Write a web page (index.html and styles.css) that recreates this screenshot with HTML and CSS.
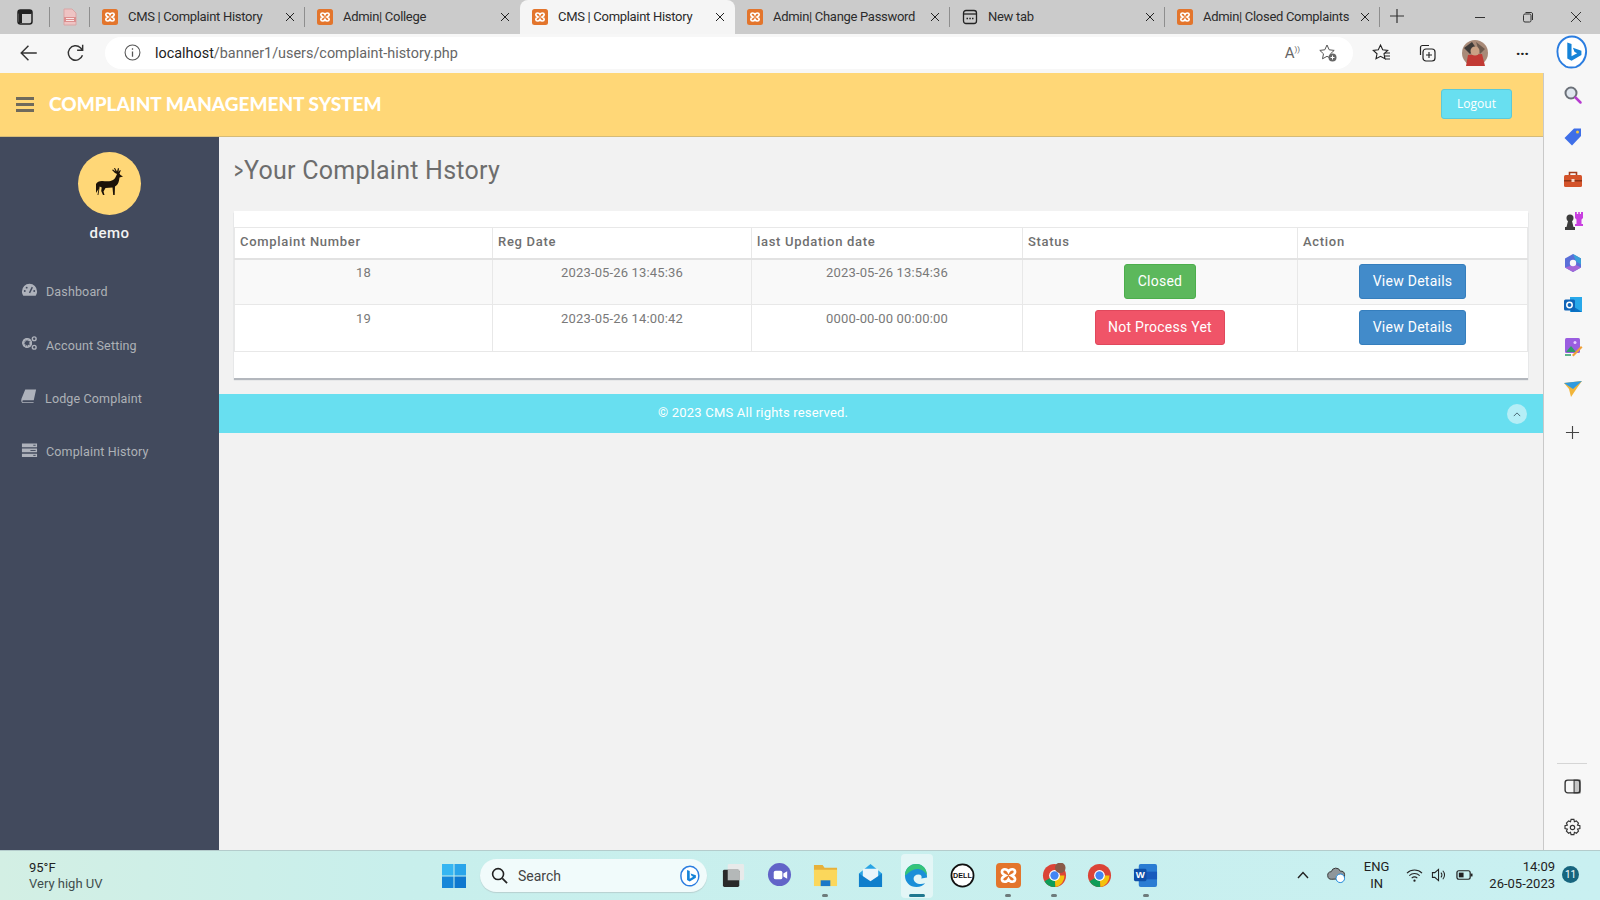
FILE: index.html
```html
<!DOCTYPE html>
<html lang="en">
<head>
    <meta charset="UTF-8">
    <title>CMS | Complaint History</title>
    <link rel="stylesheet" href="styles.css">
</head>
<body>
    <svg class="defs" width="0" height="0">
        <symbol id="xampp" viewBox="0 0 16 16">
            <rect width="16" height="16" rx="2.5" fill="#e3752c"/>
            <path d="M8 5.5C7 3.5 4 3.5 3.8 5.5 3.7 7 5 7.5 6 8 5 8.5 3.7 9 3.8 10.5 4 12.5 7 12.5 8 10.5 9 12.5 12 12.5 12.2 10.5 12.3 9 11 8.5 10 8 11 7.5 12.3 7 12.2 5.5 12 3.5 9 3.5 8 5.5z" fill="none" stroke="#fff" stroke-width="1.7"/>
        </symbol>
        <symbol id="close" viewBox="0 0 10 10">
            <path d="M1 1l8 8M9 1L1 9" fill="none" stroke="#222" stroke-width="1"/>
        </symbol>
    </svg>

    <div class="tabstrip">
        <div class="strip-left">
            <svg class="strip-icon" viewBox="0 0 18 18"><rect x="2" y="2" width="14" height="14" rx="2.5" fill="none" stroke="#222" stroke-width="1.5"/><rect x="2" y="2" width="14" height="4" rx="1.5" fill="#222"/><rect x="3" y="5" width="3" height="10" fill="#222"/></svg>
            <span class="tab-sep"></span>
            <svg class="strip-icon" viewBox="0 0 18 18"><path d="M3 1h8l4 4v12H3z" fill="#eec3c3" stroke="#d9a5a5"/><rect x="3" y="9" width="12" height="5" fill="#dc8f8f"/><path d="M5 10.5h8M5 12.5h8" stroke="#fff" stroke-width=".8"/></svg>
            <span class="tab-sep"></span>
        </div>
        <div class="tab"><svg class="tab-icon"><use href="#xampp"/></svg><span class="tab-title">CMS | Complaint History</span><svg class="tab-close"><use href="#close"/></svg></div>
        <div class="tab"><svg class="tab-icon"><use href="#xampp"/></svg><span class="tab-title">Admin| College</span><svg class="tab-close"><use href="#close"/></svg></div>
        <div class="tab tab-active"><svg class="tab-icon"><use href="#xampp"/></svg><span class="tab-title">CMS | Complaint History</span><svg class="tab-close"><use href="#close"/></svg></div>
        <div class="tab"><svg class="tab-icon"><use href="#xampp"/></svg><span class="tab-title">Admin| Change Password</span><svg class="tab-close"><use href="#close"/></svg></div>
        <div class="tab"><svg class="tab-icon" viewBox="0 0 16 16"><rect x="1.5" y="1.5" width="13" height="13" rx="2.5" fill="none" stroke="#222" stroke-width="1.3"/><path d="M2 5h12" stroke="#222" stroke-width="1.3"/><path d="M4.5 9.5H6M7.3 9.5h1.5M10 9.5h1.5" stroke="#222" stroke-width="1.3"/></svg><span class="tab-title">New tab</span><svg class="tab-close"><use href="#close"/></svg></div>
        <div class="tab"><svg class="tab-icon"><use href="#xampp"/></svg><span class="tab-title">Admin| Closed Complaints</span><svg class="tab-close"><use href="#close"/></svg></div>
        <svg class="new-tab" viewBox="0 0 16 16"><path d="M8 1v14M1 8h14" stroke="#333" stroke-width="1.2"/></svg>
        <div class="window-btns">
            <svg viewBox="0 0 12 12"><path d="M1 6.5h10" stroke="#333"/></svg>
            <svg viewBox="0 0 12 12"><rect x="1.5" y="3" width="7.5" height="8" rx="1.5" fill="none" stroke="#333"/><path d="M3.5 1.5h6a1.5 1.5 0 0 1 1 1.5v6" fill="none" stroke="#333"/></svg>
            <svg viewBox="0 0 12 12"><path d="M1 1l10 10M11 1L1 11" stroke="#333"/></svg>
        </div>
    </div>

    <div class="toolbar">
        <svg class="tool-icon back" viewBox="0 0 18 18"><path d="M16 9H2M8.5 2.5L2 9l6.5 6.5" fill="none" stroke="#333" stroke-width="1.3"/></svg>
        <svg class="tool-icon reload" viewBox="0 0 18 18"><path d="M14.8 11A6.5 6.5 0 1 1 13 4.2L15 6.5M15 1.5v5h-5" fill="none" stroke="#333" stroke-width="1.3"/></svg>
        <div class="address">
            <svg class="info" viewBox="0 0 16 16"><circle cx="8" cy="8" r="7" fill="none" stroke="#555"/><path d="M8 7v5M8 4v1.5" stroke="#555" stroke-width="1.2"/></svg>
            <span class="url"><span class="host">localhost</span>/banner1/users/complaint-history.php</span>
            <span class="read-aloud">A<sup>))</sup></span>
            <svg class="star-add" viewBox="0 0 20 20"><path d="M9 2l2.2 4.8 5 .6-3.7 3.4 1 5L9 13.3 4.5 15.8l1-5L1.8 7.4l5-.6z" fill="none" stroke="#555" stroke-width="1"/><circle cx="14.5" cy="14.5" r="4" fill="#666"/><path d="M14.5 12.5v4M12.5 14.5h4" stroke="#fff"/></svg>
        </div>
        <svg class="tool-icon fav" viewBox="0 0 20 20"><path d="M8.5 2l2.2 4.8 5 .6-3.7 3.4 1 5-4.5-2.5L4 15.8l1-5L1.3 7.4l5-.6z" fill="none" stroke="#222" stroke-width="1.1"/><path d="M13 10h5M13 13h5M13 16h5" stroke="#222" stroke-width="1"/></svg>
        <svg class="tool-icon coll" viewBox="0 0 20 20"><rect x="6" y="6" width="12" height="12" rx="3" fill="none" stroke="#222" stroke-width="1.2"/><path d="M12 9v6M9 12h6" stroke="#222" stroke-width="1.1"/><path d="M3.5 12V4.5a2 2 0 0 1 2-2H12" fill="none" stroke="#222" stroke-width="1.2"/></svg>
        <svg class="profile" viewBox="0 0 26 26"><circle cx="13" cy="13" r="13" fill="#a88a78"/><path d="M2 8l8-6 4 6-6 6z" fill="#3e3a38"/><path d="M14 2l9 7-5 5z" fill="#6d5a4e"/><path d="M4 26l2-11 14-1 3 12z" fill="#c23a34"/><circle cx="13" cy="11" r="4.5" fill="#caa184"/></svg>
        <span class="more">···</span>
        <svg class="bing" viewBox="0 0 34 36"><path d="M17 1.5C8 1.5 1.5 9 1.5 17.5c0 7 3 12.5 9 16 4 1.5 8 1 10.5.5 6-2 11-8.5 11-16.5C32 9 25.5 1.5 17 1.5z" fill="#fff" stroke="#2b7de0" stroke-width="2"/><path d="M12 8l4.5 1.5v13l6-3.3-2.8-1.3-1.7-4.3 9 3.2v4.3l-10.5 6.2-4.5-2.5z" fill="#1583d8"/></svg>
    </div>

    <div class="window-body">
        <div class="page">
            <header class="topbar">
                <div class="hamburger"><span></span><span></span><span></span></div>
                <span class="brand">COMPLAINT MANAGEMENT SYSTEM</span>
                <a class="logout">Logout</a>
            </header>
            <div class="page-body">
                <aside class="sidebar">
                    <div class="avatar">
                        <svg viewBox="0 0 40 40"><path d="M6 20c1-2 3-3 6-3 4 0 8 1 11-1 2-1 3-4 4-6l-2-1-3-3 1-.5 2.5 2L24 4h1l2 3.5L28 4l1 .5-.5 3.5 1.5-2 .8.5-1.3 3 1 1.5 2.5 1.5-3.5 1-.5 3c-.5 3-2 5-4 6l-.3 8.5h-1.5l-.7-7.5-7 .5-2 3.5 1 3.5h-1.5l-1.8-4 .5-3.5-2-1-1.3 8.5H7.5L8.5 25 6 29z" fill="#1c1208"/></svg>
                    </div>
                    <div class="user-name">demo</div>
                    <nav class="side-nav">
                        <a class="nav-item"><svg viewBox="0 0 18 16"><path d="M9 1.5a8 8 0 0 0-8 8c0 1.800.6 3.300 1.500 4.500h13c.9-1.200 1.500-2.700 1.500-4.500a8 8 0 0 0-8-8z" fill="#aeb2bb"/><path d="M9 11l3-6" stroke="#424a5d" stroke-width="1.5"/><circle cx="4" cy="9" r="1" fill="#424a5d"/><circle cx="6" cy="5.5" r="1" fill="#424a5d"/><circle cx="14" cy="9" r="1" fill="#424a5d"/></svg>Dashboard</a>
                        <a class="nav-item"><svg viewBox="0 0 18 16"><circle cx="6.5" cy="8" r="3.8" fill="none" stroke="#aeb2bb" stroke-width="2.6" stroke-dasharray="2 .7"/><circle cx="6.5" cy="8" r="4.5" fill="none" stroke="#aeb2bb" stroke-width="1.5"/><circle cx="14" cy="3.5" r="2" fill="none" stroke="#aeb2bb" stroke-width="1.5"/><circle cx="14" cy="12.5" r="2" fill="none" stroke="#aeb2bb" stroke-width="1.5"/></svg>Account Setting</a>
                        <a class="nav-item item-tight"><svg viewBox="0 0 18 16"><path d="M4.5 1H16l-2.5 11.500H2.500C1 12.500 1 14.500 2.500 14.500h11l-.3 1H2C.2 15.500 0 13 .5 11z" fill="#aeb2bb"/></svg>Lodge Complaint</a>
                        <a class="nav-item"><svg viewBox="0 0 18 16"><path d="M1 1h16v4H1zM1 6.500h16v4H1zM1 12h16v3.500H1z" fill="#aeb2bb"/><path d="M13 3h2.500M10 8.500h5.500M13 13.700h2.500" stroke="#424a5d"/></svg>Complaint History</a>
                    </nav>
                </aside>
                <main class="content">
                    <h3 class="page-title"><span class="title-mark">&gt;</span>Your Complaint Hstory</h3>
                    <section class="panel">
                        <table class="history">
                            <colgroup>
                                <col class="col-num"><col class="col-reg"><col class="col-upd"><col class="col-status"><col class="col-action">
                            </colgroup>
                            <thead>
                                <tr>
                                    <th>Complaint Number</th>
                                    <th>Reg Date</th>
                                    <th>last Updation date</th>
                                    <th>Status</th>
                                    <th>Action</th>
                                </tr>
                            </thead>
                            <tbody>
                                <tr class="odd">
                                    <td>18</td>
                                    <td>2023-05-26 13:45:36</td>
                                    <td>2023-05-26 13:54:36</td>
                                    <td><a class="btn btn-green">Closed</a></td>
                                    <td><a class="btn btn-blue">View Details</a></td>
                                </tr>
                                <tr class="even">
                                    <td>19</td>
                                    <td>2023-05-26 14:00:42</td>
                                    <td>0000-00-00 00:00:00</td>
                                    <td><a class="btn btn-red">Not Process Yet</a></td>
                                    <td><a class="btn btn-blue">View Details</a></td>
                                </tr>
                            </tbody>
                        </table>
                    </section>
                    <footer class="site-footer">
                        <span class="copy">© 2023 CMS All rights reserved.</span>
                        <a class="go-top"><svg viewBox="0 0 10 6"><path d="M1 5l4-4 4 4" fill="none" stroke="#3e5a66" stroke-width="1.1"/></svg></a>
                    </footer>
                </main>
            </div>
        </div>
        <aside class="edge-rail">
            <div class="rail-top">
                <svg viewBox="0 0 20 20"><circle cx="8" cy="8" r="5.5" fill="#dfe6ee" stroke="#6b7078" stroke-width="2"/><path d="M12.5 12.5l5 5" stroke="#b63bd0" stroke-width="2.5" stroke-linecap="round"/></svg>
                <svg viewBox="0 0 20 20"><path d="M11 1.5h7V9l-9 9.5L1.500 11z" fill="#3f6fe8"/><circle cx="14.5" cy="5" r="1.5" fill="#f4c63d"/></svg>
                <svg viewBox="0 0 20 20"><rect x="1" y="6" width="18" height="12" rx="1.5" fill="#d4532a"/><path d="M6.5 6V3.5h7V6" fill="none" stroke="#a33c1c" stroke-width="1.6"/><rect x="1" y="11" width="18" height="1.5" fill="#8f3516"/><rect x="8.5" y="10" width="3" height="3" fill="#f4d5c4"/></svg>
                <svg viewBox="0 0 20 20"><circle cx="7" cy="7" r="3.5" fill="#3c3c3c"/><path d="M5 10h4l1.500 6h-7zM2 16h10v3H2z" fill="#3c3c3c"/><path d="M12 1h1.800v2h1.400V1h1.600v2h1.200V1H20v6l-1.500 1.500V13H20v2h-8v-2h1.500V8.500L12 7z" fill="#c83ee0"/></svg>
                <svg viewBox="0 0 20 20"><path d="M10 1l8 4.500v9L10 19l-8-4.500v-9z" fill="#5a6fd8"/><path d="M10 1l8 4.500v6L13 8.500z" fill="#3aa0d8"/><path d="M2 14.500L10 19l8-4.500-6-3z" fill="#a568d8"/><circle cx="10" cy="10" r="3.2" fill="#f8f8f8"/></svg>
                <svg viewBox="0 0 20 20"><path d="M7 2h12v15H7z" fill="#28a8ea"/><path d="M8 10l11 7H8z" fill="#0a72c4"/><rect x="1" y="4.5" width="11" height="11" rx="1.5" fill="#0f64b8"/><circle cx="6.5" cy="10" r="2.7" fill="none" stroke="#fff" stroke-width="1.5"/></svg>
                <svg viewBox="0 0 20 20"><rect x="2" y="1" width="15" height="15" rx="1.5" fill="#9a5de0"/><path d="M3 15l5-6 5 6z" fill="#2c9c66"/><circle cx="12" cy="5.5" r="1.5" fill="#e6d0ff"/><path d="M9 18l9-9 1.500 1.500-9 9z" fill="#f0a038"/><path d="M2 18h6" stroke="#2c9c66" stroke-width="1.5"/></svg>
                <svg viewBox="0 0 20 20"><path d="M1 4l18-2-5 7-6 9-2-8z" fill="#f1b53a"/><path d="M1 4l18-2-9 8z" fill="#2f9ae0"/></svg>
                <svg class="rail-plus" viewBox="0 0 16 16"><path d="M8 1v14M1 8h14" stroke="#444" stroke-width="1.2"/></svg>
            </div>
            <div class="rail-bottom">
                <span class="rail-line"></span>
                <svg viewBox="0 0 18 18"><rect x="2" y="3" width="14" height="12" rx="2.5" fill="none" stroke="#333" stroke-width="1.3"/><rect x="10.5" y="3" width="5.5" height="12" fill="#333" fill-opacity=".25" stroke="#333"/></svg>
                <svg viewBox="0 0 20 20"><path d="M8.500 1.500h3l.5 2.500 2-.9 2.300 2.200-1 2.100 2.500.6v3.200l-2.500.5 1 2.100-2.200 2.200-2.100-1-.5 2.500h-3l-.6-2.500-2 1-2.300-2.200 1-2.100-2.500-.5V8l2.500-.6-1-2.100 2.300-2.200 2 .9z" fill="none" stroke="#333" stroke-width="1.2"/><circle cx="10" cy="10" r="2.3" fill="none" stroke="#333" stroke-width="1.2"/></svg>
            </div>
        </aside>
    </div>

    <div class="taskbar">
        <div class="weather">
            <div class="temp">95°F</div>
            <div>Very high UV</div>
        </div>
        <svg class="win-logo" viewBox="0 0 24 24"><path d="M0 0h11.500v11.500H0z" fill="#35b6f2"/><path d="M12.500 0H24v11.500H12.500z" fill="#29a5ea"/><path d="M0 12.500h11.500V24H0z" fill="#1587d9"/><path d="M12.500 12.500H24V24H12.500z" fill="#0e78cf"/></svg>
        <div class="search">
            <svg viewBox="0 0 18 18"><circle cx="7.5" cy="7.5" r="5.8" fill="none" stroke="#222" stroke-width="1.7"/><path d="M12 12l5 5" stroke="#222" stroke-width="1.9"/></svg>
            <span>Search</span>
            <svg class="search-bing" viewBox="0 0 34 36"><path d="M17 1.5C8 1.5 1.5 9 1.5 17.5c0 7 3 12.5 9 16 4 1.5 8 1 10.5.5 6-2 11-8.5 11-16.5C32 9 25.5 1.5 17 1.5z" fill="#fff" stroke="#2b7de0" stroke-width="2.5"/><path d="M12 8l4.500 1.500v13l6-3.300-2.800-1.300-1.700-4.300 9 3.200v4.300l-10.500 6.200-4.500-2.500z" fill="#1583d8"/></svg>
        </div>
        <div class="task-apps">
            <span class="app"><svg viewBox="0 0 26 26"><rect x="7" y="1" width="17" height="17" rx="1.5" fill="#e8eaea"/><rect x="2" y="7" width="17" height="18" rx="1.5" fill="#2a2a2a"/><path d="M7 7h12v11H7z" fill="#b4b8b8"/></svg></span>
            <span class="app"><svg viewBox="0 0 26 26"><circle cx="13" cy="12" r="12" fill="#6264c8"/><path d="M6 22l2-5 5 4z" fill="#6264c8"/><rect x="7" y="8" width="9" height="9" rx="2" fill="#fff"/><path d="M17 11l4-2.500v8L17 14z" fill="#fff"/></svg></span>
            <span class="app has-dot"><svg viewBox="0 0 26 26"><path d="M1 2h9l2 3h13v6H1z" fill="#e7b13a"/><path d="M1 7h24v17H1z" fill="#fbd75b"/><rect x="8" y="18" width="10" height="6" fill="#1b78c8"/></svg></span>
            <span class="app"><svg viewBox="0 0 26 26"><path d="M13 1l12 10v14H1V11z" fill="#29a4e4"/><path d="M5 6h16v11l-8 4-8-4z" fill="#e9f5fb"/><path d="M1 11l12 8 12-8v14H1z" fill="#0f7fcc"/></svg></span>
            <span class="app app-active"><svg viewBox="0 0 26 26"><path d="M24 15c0-8-4-14-11-14C6 1 1 6 1 13c0 7 5 12 12 12 4 0 7-1.500 9-4-6 2-12 0-12-5 0-2 2-4 5-4 3 0 4 2 3 4z" fill="#1a8fd8"/><path d="M1 13C1 6 6 1 13 1c7 0 11 6 11 12-3-6-9-8-14-6-4 1.500-7 5-9 6z" fill="#35c47a"/></svg></span>
            <span class="app"><svg viewBox="0 0 26 26"><circle cx="13" cy="13" r="11.5" fill="#fff" stroke="#111" stroke-width="1.8"/><text x="13" y="15.8" text-anchor="middle" class="dell-text">DELL</text></svg></span>
            <span class="app has-dot"><svg><use href="#xampp"/></svg></span>
            <span class="app has-dot"><svg viewBox="0 0 26 26"><circle cx="13" cy="13" r="12" fill="#db4437"/><path d="M13 13L2.600 19A12 12 0 0 0 13 25h1z" fill="#0f9d58"/><path d="M13 13h10.400A12 12 0 0 1 14 25z" fill="#f4c20d"/><circle cx="13" cy="13" r="5.6" fill="#fff"/><circle cx="13" cy="13" r="4.3" fill="#4285f4"/><circle cx="19" cy="5" r="5.5" fill="#8a5a48"/></svg></span>
            <span class="app"><svg viewBox="0 0 26 26"><circle cx="13" cy="13" r="12" fill="#db4437"/><path d="M13 13L2.600 19A12 12 0 0 0 13 25h1z" fill="#0f9d58"/><path d="M13 13h10.400A12 12 0 0 1 14 25z" fill="#f4c20d"/><circle cx="13" cy="13" r="5.6" fill="#fff"/><circle cx="13" cy="13" r="4.3" fill="#4285f4"/></svg></span>
            <span class="app has-dot"><svg viewBox="0 0 26 26"><rect x="6" y="1" width="19" height="24" rx="2" fill="#2b7cd3"/><path d="M6 9h19v8H6z" fill="#185abd"/><rect x="1" y="6" width="13" height="13" rx="1.5" fill="#0f4fa8"/><text x="7.5" y="16" text-anchor="middle" class="word-text">W</text></svg></span>
        </div>
        <div class="tray">
            <svg class="tray-chev" viewBox="0 0 12 8"><path d="M1 7l5-5.500L11 7" fill="none" stroke="#222" stroke-width="1.4"/></svg>
            <svg class="tray-cloud" viewBox="0 0 20 20"><path d="M5 15a4 4 0 0 1-.5-8 5 5 0 0 1 9.500-.5 4 4 0 0 1 1 8z" fill="#8f979b" stroke="#333"/><circle cx="14" cy="14" r="4.5" fill="#fff" stroke="#1583d8"/></svg>
            <div class="lang"><div>ENG</div><div>IN</div></div>
            <svg class="tray-ic wifi" viewBox="0 0 18 16"><path d="M1 6a11.500 11.500 0 0 1 16 0M3.500 8.700a8 8 0 0 1 11 0M6 11.300a4.500 4.500 0 0 1 6 0" fill="none" stroke="#222" stroke-width="1.1"/><circle cx="9" cy="14" r="1.2" fill="#222"/></svg>
            <svg class="tray-ic" viewBox="0 0 18 16"><path d="M1.500 5.500H4L8 2v12l-4-3.500H1.500z" fill="none" stroke="#222" stroke-width="1.1"/><path d="M10.500 5.500a3.500 3.500 0 0 1 0 5M12.500 3.500a6.500 6.500 0 0 1 0 9" fill="none" stroke="#222" stroke-width="1.1"/></svg>
            <svg class="tray-ic" viewBox="0 0 18 16"><rect x="1" y="3.5" width="14" height="9" rx="2" fill="none" stroke="#222" stroke-width="1.3"/><rect x="3" y="5.5" width="5" height="5" fill="#222"/><rect x="15.5" y="6.5" width="2" height="3" fill="#222"/></svg>
            <div class="clock"><div>14:09</div><div>26-05-2023</div></div>
            <span class="notif">11</span>
        </div>
    </div>
</body>
</html>
```

FILE: styles.css
```css
* {
    box-sizing: border-box;
}
html, body {
    margin: 0;
    height: 100%;
    overflow: hidden;
}
body {
    width: 1600px;
    height: 900px;
    display: flex;
    flex-direction: column;
    font-family: "Open Sans", sans-serif;
    background-color: #f2f2f2;
    color: #222;
}
.defs {
    position: absolute;
}

/* browser tabs */
.tabstrip {
    height: 34px;
    flex: none;
    display: flex;
    background-color: #cbcbcb;
    font-family: Roboto, sans-serif;
    font-size: 13px;
    color: #2b2b2b;
}
.strip-left {
    width: 90px;
    display: flex;
    align-items: center;
    padding-left: 16px;
}
.strip-icon {
    width: 18px;
    height: 18px;
    flex: none;
}
.tab-sep {
    width: 1px;
    height: 20px;
    margin: 0 11px 0 15px;
    background-color: #8e8e8e;
}
.tab-sep:last-child {
    margin: 0 0 0 10px;
}
.tab {
    width: 215px;
    height: 34px;
    display: flex;
    align-items: center;
    padding: 0 10px 0 12px;
    position: relative;
}
.tab::after {
    content: "";
    position: absolute;
    right: 0;
    top: 7px;
    height: 20px;
    width: 1px;
    background-color: #8e8e8e;
}
.tab-active {
    background-color: #f5f5f5;
    border-radius: 8px 8px 0 0;
}
.tab-active::after,
.tab:nth-child(3)::after {
    display: none;
}
.tab-icon {
    width: 16px;
    height: 16px;
    flex: none;
}
.tab-title {
    flex: 1;
    margin: -2px 0 0 10px;
    letter-spacing: -.3px;
    white-space: nowrap;
    overflow: hidden;
}
.tab-close {
    width: 10px;
    height: 10px;
    flex: none;
}
.new-tab {
    width: 16px;
    height: 16px;
    margin: 8px 0 0 9px;
}
.window-btns {
    margin-left: auto;
    display: flex;
    align-items: center;
    gap: 36px;
    padding-right: 18px;
}
.window-btns svg {
    width: 12px;
    height: 12px;
}

/* address bar */
.toolbar {
    height: 39px;
    flex: none;
    display: flex;
    align-items: center;
    padding-bottom: 2px;
    background-color: #f7f7f7;
    position: relative;
}
.tool-icon {
    width: 20px;
    height: 20px;
    flex: none;
}
.back {
    margin-left: 19px;
}
.reload {
    margin-left: 27px;
}
.address {
    width: 1248px;
    height: 32px;
    margin-left: 19px;
    border-radius: 16px;
    background-color: #fff;
    display: flex;
    align-items: center;
    padding-left: 19px;
}
.info {
    width: 17px;
    height: 17px;
    flex: none;
}
.url {
    margin: 1px 0 0 14px;
    font-family: Roboto, sans-serif;
    font-size: 14.4px;
    color: #666;
}
.host {
    color: #222;
}
.read-aloud {
    margin-left: auto;
    font-family: Roboto, sans-serif;
    font-size: 15px;
    color: #666;
}
.read-aloud sup {
    font-size: 8px;
}
.star-add {
    width: 20px;
    height: 20px;
    margin: 0 15px 0 18px;
}
.fav {
    margin-left: 19px;
}
.coll {
    margin-left: 25px;
}
.profile {
    width: 26px;
    height: 26px;
    margin-left: 25px;
    flex: none;
}
.more {
    margin-left: 28px;
    font-size: 15px;
    font-weight: 700;
}
.bing {
    width: 32px;
    height: 36px;
    position: absolute;
    left: 1556px;
    top: 0;
}

.window-body {
    flex: 1;
    min-height: 0;
    display: flex;
}
.page {
    flex: 1;
    min-width: 0;
    display: flex;
    flex-direction: column;
    border-right: 1px solid #c9c9c9;
}
.topbar {
    height: 64px;
    flex: none;
    display: flex;
    align-items: center;
    background-color: #ffd777;
    border-bottom: 1px solid #d5bb78;
    padding: 0 31px 0 16px;
}
.hamburger {
    display: flex;
    flex-direction: column;
    gap: 2.5px;
    width: 18px;
}
.hamburger span {
    height: 3.5px;
    background-color: #6f6a5c;
}
.brand {
    margin: -2px 0 0 15px;
    font-family: Lato, sans-serif;
    font-size: 19px;
    font-weight: 900;
    color: #fff;
}
.logout {
    margin: -1px 0 0 auto;
    width: 71px;
    height: 30px;
    line-height: 28px;
    text-align: center;
    font-size: 12px;
    color: #fff;
    background-color: #68dff0;
    border: 1px solid #5dc9d8;
    border-radius: 3px;
}
.page-body {
    flex: 1;
    min-height: 0;
    display: flex;
}

/* left menu */
.sidebar {
    width: 219px;
    flex: none;
    background-color: #424a5d;
    padding-top: 15px;
    font-family: Roboto, sans-serif;
}
.avatar {
    width: 63px;
    height: 63px;
    margin: 0 auto;
    border-radius: 50%;
    background-color: #ffd777;
    display: flex;
    align-items: center;
    justify-content: center;
}
.avatar svg {
    width: 40px;
    height: 40px;
}
.user-name {
    margin-top: 9px;
    text-align: center;
    font-size: 15px;
    font-weight: 500;
    letter-spacing: .5px;
    color: #f2f2f2;
}
.side-nav {
    margin-top: 23px;
    display: flex;
    flex-direction: column;
    padding-left: 21px;
}
.nav-item {
    height: 53.4px;
    display: flex;
    align-items: center;
    gap: 8px;
    font-size: 12.5px;
    letter-spacing: .15px;
    color: #aeb2b7;
}
.nav-item svg {
    width: 17px;
    height: 16px;
    flex: none;
    margin-top: -4px;
}
.item-tight {
    gap: 7px;
}

/* main area */
.content {
    flex: 1;
    min-width: 0;
    font-family: Roboto, sans-serif;
}
.page-title {
    margin: 0;
    height: 74px;
    padding: 19px 0 0 15px;
    font-size: 25px;
    font-weight: 400;
    letter-spacing: .25px;
    color: #6d6d6d;
}
/* the > is narrower than the font draws it */
.title-mark {
    display: inline-block;
    width: 10px;
    transform: scaleX(.7);
    transform-origin: left center;
}
.panel {
    margin: 0 15px;
    height: 167px;
    padding-top: 16px;
    background-color: #fff;
    box-shadow: 0 2px 1px #b3b7bd;
}
.history {
    width: 100%;
    table-layout: fixed;
    border-collapse: collapse;
    font-size: 13px;
    letter-spacing: .15px;
    color: #797979;
}
.col-num { width: 258px; }
.col-reg { width: 259px; }
.col-upd { width: 271px; }
.col-status { width: 275px; }
.history th, .history td {
    border: 1px solid #e8e8e8;
}
.history th {
    height: 31px;
    padding: 0 5px 2px;
    text-align: left;
    font-weight: 500;
    color: #6f6f6f;
    letter-spacing: .7px;
    border-bottom: 2px solid #e2e2e2;
}
.history td {
    height: 46px;
    padding: 5px 5px 0;
    text-align: center;
    vertical-align: top;
}
.even td {
    height: 47px;
    padding-top: 6px;
}
.odd td {
    background-color: #f9f9f9;
}
.btn {
    display: inline-block;
    margin-top: -1px;
    padding: 0 12.5px;
    height: 35px;
    line-height: 32px;
    font-size: 14px;
    letter-spacing: .25px;
    color: #fff;
    border: 1px solid;
    border-radius: 3px;
}
.btn-green {
    background-color: #5cb85c;
    border-color: #4cae4c;
}
.btn-blue {
    background-color: #428bca;
    border-color: #357ebd;
}
.btn-red {
    background-color: #f05468;
    border-color: #e0485c;
}
.site-footer {
    margin-top: 16px;
    height: 39px;
    background-color: #68dff0;
    display: flex;
    align-items: center;
    position: relative;
    padding: 0 0 3px 439px;
    font-size: 13px;
    letter-spacing: .2px;
    color: #fff;
}
.go-top {
    position: absolute;
    right: 16px;
    top: 10px;
    width: 20px;
    height: 20px;
    border-radius: 50%;
    background-color: #b5eef6;
    display: flex;
    align-items: center;
    justify-content: center;
}
.go-top svg {
    width: 8px;
    height: 5px;
}

/* edge side rail */
.edge-rail {
    width: 56px;
    flex: none;
    display: flex;
    flex-direction: column;
    justify-content: space-between;
    align-items: center;
    background-color: #f7f7f7;
    padding-bottom: 13px;
}
.rail-top, .rail-bottom {
    display: flex;
    flex-direction: column;
    align-items: center;
}
.rail-top {
    padding-top: 1px;
}
.rail-top svg {
    width: 20px;
    height: 20px;
    margin: 11px 0 11px 1px;
}
.rail-top .rail-plus {
    width: 15px;
    height: 15px;
    margin: 15px 0 0;
}
.rail-line {
    width: 30px;
    height: 1px;
    background-color: #d5d5d5;
    margin-bottom: 13px;
}
.rail-bottom svg {
    width: 19px;
    height: 19px;
    margin-bottom: 22px;
}
.rail-bottom svg:last-child {
    margin-bottom: 0;
}

/* windows taskbar */
.taskbar {
    height: 50px;
    flex: none;
    display: flex;
    align-items: center;
    position: relative;
    background: linear-gradient(90deg, #d3efe4 0%, #c8efec 25%, #c9f0f1 100%);
    border-top: 1px solid #b4cccc;
    font-family: Roboto, sans-serif;
}
.weather {
    width: 442px;
    padding-left: 29px;
    font-size: 13px;
    line-height: 16px;
    color: #3f4d4d;
}
.temp {
    color: #222;
}
.win-logo {
    width: 24px;
    height: 24px;
}
.search {
    width: 227px;
    height: 33px;
    margin-left: 14px;
    border-radius: 17px;
    background-color: #f1fbfb;
    box-shadow: 0 1px 1px #b7d0d0;
    display: flex;
    align-items: center;
    padding: 0 7px 0 11px;
    font-size: 14px;
    color: #444;
}
.search svg {
    width: 17px;
    height: 17px;
}
.search span {
    margin-left: 10px;
}
.search .search-bing {
    margin-left: auto;
    width: 20px;
    height: 22px;
}
.task-apps {
    display: flex;
    margin-left: 10.5px;
    gap: 13.8px;
}
.app {
    width: 32px;
    height: 44px;
    display: flex;
    align-items: center;
    justify-content: center;
    position: relative;
}
.app svg {
    width: 25px;
    height: 25px;
}
.has-dot::after, .app-active::after {
    content: "";
    position: absolute;
    bottom: 1px;
    left: 50%;
    width: 6px;
    height: 3px;
    margin-left: -3px;
    border-radius: 2px;
    background-color: #6d7b7b;
}
.app-active {
    background-color: #e3f6f6;
    border-radius: 4px;
}
.app-active::after {
    width: 16px;
    margin-left: -8px;
    background-color: #21788f;
}
.dell-text {
    font-family: "Liberation Sans", sans-serif;
    font-size: 7.5px;
    font-weight: 700;
    fill: #111;
}
.word-text {
    font-family: "Liberation Sans", sans-serif;
    font-size: 10px;
    font-weight: 700;
    fill: #fff;
}
.tray {
    position: absolute;
    right: 21px;
    top: 0;
    height: 47px;
    display: flex;
    align-items: center;
    font-size: 13px;
    color: #222;
}
.tray-chev {
    width: 12px;
    height: 8px;
}
.tray-cloud {
    width: 19px;
    height: 19px;
    margin-left: 18px;
}
.lang {
    margin-left: 18px;
    text-align: center;
    line-height: 17px;
}
.tray-ic {
    width: 17px;
    height: 16px;
    margin-left: 8px;
}
.wifi {
    margin-left: 17px;
}
.clock {
    margin-left: 16px;
    text-align: right;
    line-height: 17px;
}
.notif {
    width: 17px;
    height: 17px;
    margin-left: 7px;
    border-radius: 50%;
    background-color: #17657e;
    color: #fff;
    font-size: 10px;
    line-height: 17px;
    text-align: center;
}
```
